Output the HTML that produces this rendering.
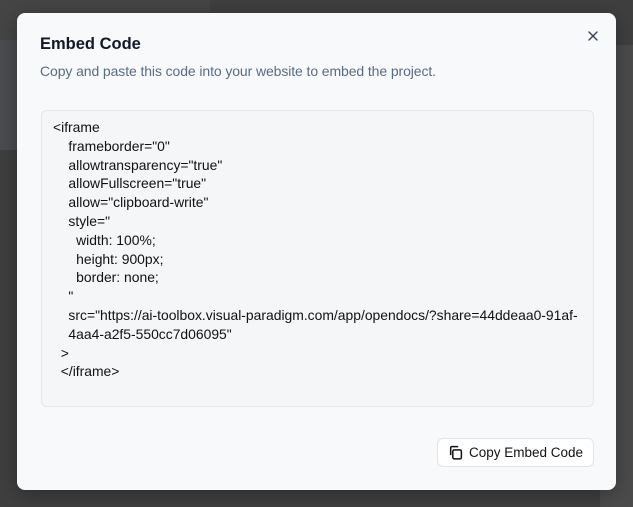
<!DOCTYPE html>
<html><head><style>
body{margin:0;width:633px;height:507px;background:#3f3f3f;position:relative;overflow:hidden;font-family:"Liberation Sans",sans-serif}
.bg1{position:absolute;left:0;top:0;width:210px;height:40px;background:#454545}
.bg2{position:absolute;left:0;top:40px;width:20px;height:110px;background:#4a4c50}
.bgr{position:absolute;left:600px;top:45px;width:33px;height:462px;background:#4b4b4b}
.modal{position:absolute;left:17px;top:13px;width:599px;height:477px;background:#f8f9fb;border-radius:8px;box-shadow:0 4px 20px rgba(0,0,0,.3)}
h1{position:absolute;left:23px;top:22px;margin:0;font-size:16.5px;font-weight:bold;color:#111827}
.sub{position:absolute;left:23px;top:50px;font-size:14px;color:#5b6b86;letter-spacing:-0.1px}
.x{position:absolute;left:570px;top:16px}
.code{position:absolute;left:24px;top:97px;width:553px;height:297px;border:1px solid #e5e7eb;border-radius:6px;background:#f5f6f8;box-sizing:border-box}
pre{margin:0;position:absolute;left:11px;top:7px;font-family:"Liberation Sans",sans-serif;font-size:13.9px;line-height:18.8px;color:#111}
.btn{position:absolute;left:420px;top:425px;width:157px;height:29px;border:1px solid #e2e4e8;border-radius:6px;background:#fff;box-sizing:border-box;font-size:13.5px;color:#111;display:flex;align-items:center;padding-left:10px}
.btn svg{margin-right:6px}
</style></head><body>
<div class="bg1"></div><div class="bg2"></div><div class="bgr"></div>
<div class="modal">
<h1>Embed Code</h1>
<div class="sub">Copy and paste this code into your website to embed the project.</div>
<div class="x"><svg width="12" height="12" viewBox="0 0 12 12" stroke="#374151" stroke-width="1.4" stroke-linecap="round"><path d="M2 2L10 10M10 2L2 10"/></svg></div>
<div class="code"><pre>&lt;iframe
    frameborder="0"
    allowtransparency="true"
    allowFullscreen="true"
    allow="clipboard-write"
    style="
      width: 100%;
      height: 900px;
      border: none;
    "
    src="https://ai-toolbox.visual-paradigm.com/app/opendocs/?share=44ddeaa0-91af-
    4aa4-a2f5-550cc7d06095"
  &gt;
  &lt;/iframe&gt;</pre></div>
<div class="btn"><svg width="15" height="15" viewBox="0 0 14 14" fill="none" stroke="#111" stroke-width="1.4"><rect x="4.5" y="4.5" width="8" height="8.5" rx="1.5"/><path d="M2.5 9.5V2.5a1 1 0 0 1 1-1h6"/></svg>Copy Embed Code</div>
</div>
</body></html>
